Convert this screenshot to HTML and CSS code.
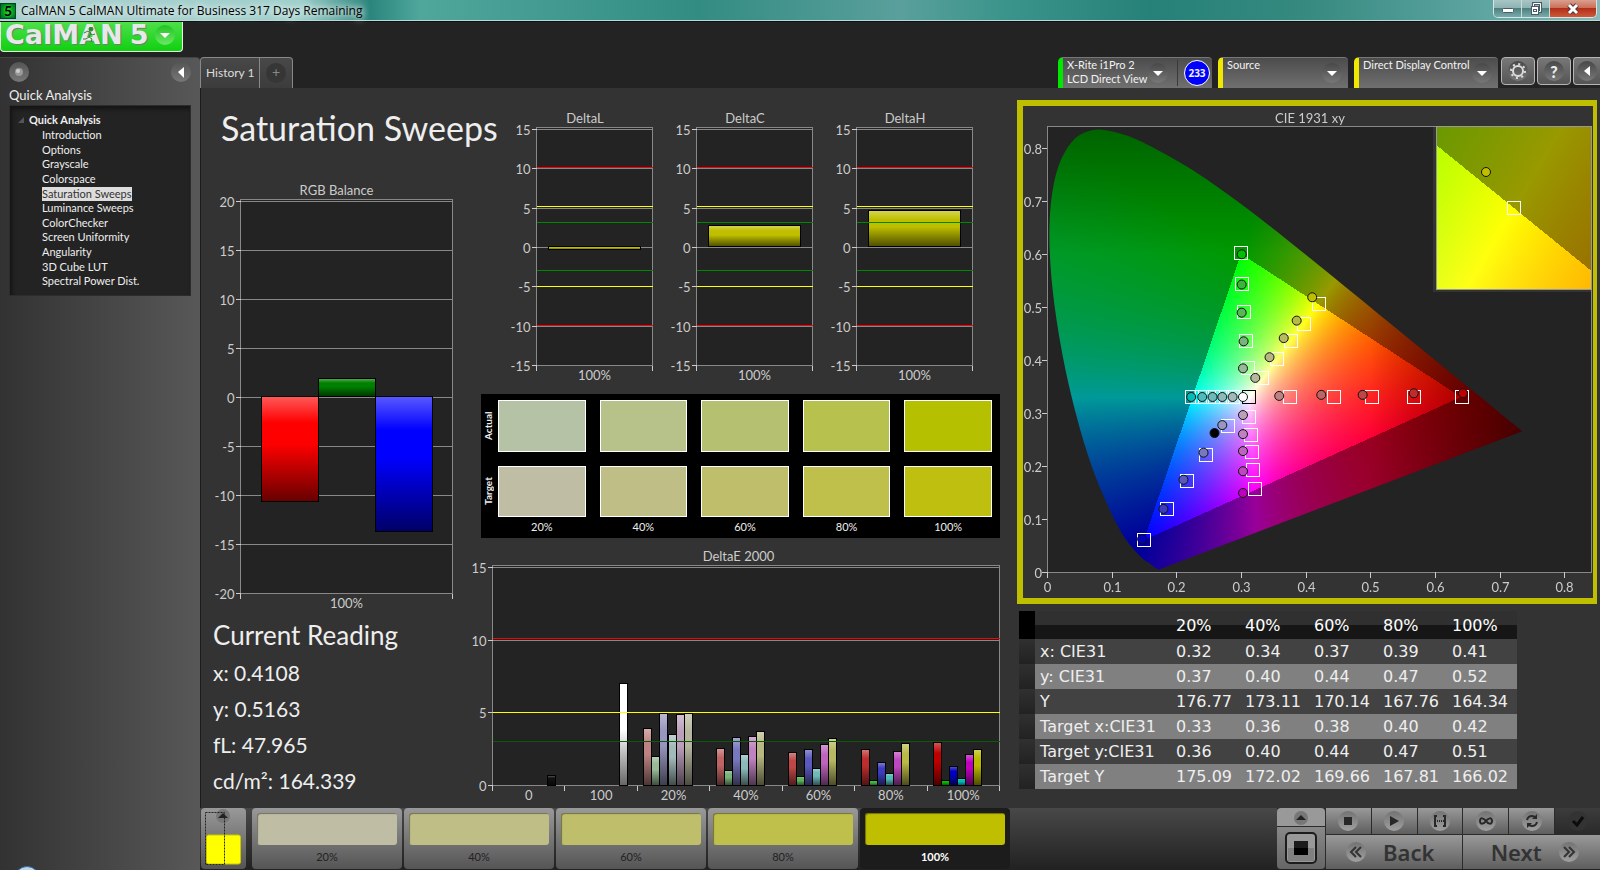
FILE: index.html
```html
<!DOCTYPE html>
<html lang="en">
<head>
    <meta charset="UTF-8">
    <meta name="viewport" content="width=device-width, initial-scale=1.0">
    <title>CalMAN 5 CalMAN Ultimate for Business</title>
    <link rel="stylesheet" href="styles.css">
</head>
<body>
    <header class="titlebar">
        <span class="app-icon">5</span>
        <span class="app-title">CalMAN 5 CalMAN Ultimate for Business 317 Days Remaining</span>
        <div class="window-controls">
            <button type="button" aria-label="Minimize"><svg width="14" height="14"><rect x="1.5" y="6.5" width="11" height="4" rx="1" fill="#fff" stroke="#4a5a66"/></svg></button>
            <button type="button" aria-label="Restore"><svg width="14" height="14" fill="none"><path d="M4.500 4V1.500h7v8H10" stroke="#4a5a66" stroke-width="3"/><path d="M4.500 4V1.500h7v8H10" stroke="#fff"/><rect x="2.500" y="4.500" width="7" height="8" fill="#fff" stroke="#4a5a66"/><rect x="4.500" y="7.500" width="3" height="2" stroke="#4a5a66"/></svg></button>
            <button type="button" class="close" aria-label="Close"><svg width="14" height="14"><path d="M3 3l8 8M11 3l-8 8" stroke="#54343a" stroke-width="5"/><path d="M3 3l8 8M11 3l-8 8" stroke="#fff" stroke-width="3"/></svg></button>
        </div>
    </header>

    <div class="app">
        <aside class="side">
            <button type="button" class="logo">
                <span class="logo-text">CalMAN</span><span class="logo-text">5</span>
                <svg class="runner" viewBox="0 0 14 16" width="14" height="16"><circle cx="9" cy="2" r="2"/><path d="M2 6l4-2 3 2-2 4 3 2-1 3M7 10l-3 2-3 0M8 6l2 2 3-1"/></svg>
                <span class="knob green"><svg width="20" height="20"><path d="M5 8h10l-5 5z" fill="#fff"/></svg></span>
            </button>
            <nav class="sidebar">
                <div class="side-tools">
                    <button type="button" class="knob" aria-label="Pin"><svg width="20" height="20"><circle cx="10" cy="10" r="4" fill="#999"/><circle cx="9" cy="9" r="2" fill="#ccc"/></svg></button>
                    <button type="button" class="knob" aria-label="Collapse"><svg width="20" height="20"><path d="M13 5v11l-6-6z" fill="#fff"/></svg></button>
                </div>
                <h2>Quick Analysis</h2>
                <div class="tree">
                    <p><svg width="8" height="8"><path d="M7 1v6H1z" fill="#555"/></svg>Quick Analysis</p>
                    <ul>
                        <li><a href="#">Introduction</a></li>
                        <li><a href="#">Options</a></li>
                        <li><a href="#">Grayscale</a></li>
                        <li><a href="#">Colorspace</a></li>
                        <li><a href="#" class="selected">Saturation Sweeps</a></li>
                        <li><a href="#">Luminance Sweeps</a></li>
                        <li><a href="#">ColorChecker</a></li>
                        <li><a href="#">Screen Uniformity</a></li>
                        <li><a href="#">Angularity</a></li>
                        <li><a href="#">3D Cube LUT</a></li>
                        <li><a href="#">Spectral Power Dist.</a></li>
                    </ul>
                </div>
                <span class="orb"></span>
            </nav>
        </aside>

        <main class="main">
            <div class="topbar">
                <div class="tabs">
                    <button type="button" class="tab">History 1</button>
                    <button type="button" class="tab add"><span>+</span></button>
                </div>
                <div class="devices">
                    <button type="button" class="device meter">
                        <span class="device-name">X-Rite i1Pro 2<br>LCD Direct View</span>
                        <span class="knob"><svg width="20" height="20"><path d="M5 8h10l-5 5z" fill="#fff"/></svg></span>
                        <span class="count"><b>233</b></span>
                    </button>
                    <button type="button" class="device source">
                        <span class="device-name">Source</span>
                        <span class="knob"><svg width="20" height="20"><path d="M5 8h10l-5 5z" fill="#fff"/></svg></span>
                    </button>
                    <button type="button" class="device display">
                        <span class="device-name">Direct Display Control</span>
                        <span class="knob"><svg width="20" height="20"><path d="M5 8h10l-5 5z" fill="#fff"/></svg></span>
                    </button>
                    <button type="button" class="square" aria-label="Settings"><span class="knob"><svg width="20" height="20" fill="none" stroke="#ddd"><circle cx="10" cy="10" r="5" stroke-width="2"/><circle cx="10" cy="10" r="7" stroke-width="2" stroke-dasharray="2 3.500"/></svg></span></button>
                    <button type="button" class="square" aria-label="Help"><span class="knob">?</span></button>
                    <button type="button" class="square last" aria-label="Collapse"><span class="knob"><svg width="20" height="20"><path d="M13 5v10l-6-5z" fill="#fff"/></svg></span></button>
                </div>
            </div>

            <div class="content">
                <section class="col-left">
                    <h1>Saturation Sweeps</h1>
                    <div class="chart rgb" id="rgbChart"></div>
                    <div class="reading">
                        <h3>Current Reading</h3>
                        <p>x: 0.4108</p>
                        <p>y: 0.5163</p>
                        <p>fL: 47.965</p>
                        <p>cd/m²: 164.339</p>
                    </div>
                </section>

                <section class="col-mid">
                    <div class="deltas">
                        <div class="chart" id="deltaL"></div>
                        <div class="chart" id="deltaC"></div>
                        <div class="chart" id="deltaH"></div>
                    </div>
                    <div class="swatches">
                        <span class="row-name">Actual</span>
                        <i class="a20"></i><i class="a40"></i><i class="a60"></i><i class="a80"></i><i class="a100"></i>
                        <span class="row-name">Target</span>
                        <i class="t20"></i><i class="t40"></i><i class="t60"></i><i class="t80"></i><i class="t100"></i>
                        <span></span>
                        <span>20%</span><span>40%</span><span>60%</span><span>80%</span><span>100%</span>
                    </div>
                    <div class="chart delta-e" id="deltaE"></div>
                </section>

                <section class="col-right">
                    <div class="cie" id="cie"><canvas></canvas></div>
                    <table class="data">
                        <thead>
                            <tr><td class="gutter"></td><th class="name"></th><th>20%</th><th>40%</th><th>60%</th><th>80%</th><th>100%</th></tr>
                        </thead>
                        <tbody>
                            <tr><td class="gutter"></td><th>x: CIE31</th><td>0.32</td><td>0.34</td><td>0.37</td><td>0.39</td><td>0.41</td></tr>
                            <tr><td class="gutter"></td><th>y: CIE31</th><td>0.37</td><td>0.40</td><td>0.44</td><td>0.47</td><td>0.52</td></tr>
                            <tr><td class="gutter"></td><th>Y</th><td>176.77</td><td>173.11</td><td>170.14</td><td>167.76</td><td>164.34</td></tr>
                            <tr><td class="gutter"></td><th>Target x:CIE31</th><td>0.33</td><td>0.36</td><td>0.38</td><td>0.40</td><td>0.42</td></tr>
                            <tr><td class="gutter"></td><th>Target y:CIE31</th><td>0.36</td><td>0.40</td><td>0.44</td><td>0.47</td><td>0.51</td></tr>
                            <tr><td class="gutter"></td><th>Target Y</th><td>175.09</td><td>172.02</td><td>169.66</td><td>167.81</td><td>166.02</td></tr>
                        </tbody>
                    </table>
                </section>
            </div>

            <footer class="bottombar">
                <button type="button" class="level-color" aria-label="Color"><svg width="45" height="61"><circle cx="22" cy="8" r="7" fill="#777"/><path d="M17 10l5-5 5 5z" fill="#222"/><rect x="5.500" y="27" width="34" height="29" rx="2" fill="#ff0" stroke="#c8c800"/><path d="M4.500 4.500h19v52h-19z" fill="none" stroke="#222" stroke-dasharray="2 1"/></svg></button>
                <div class="levels">
                    <button type="button" class="level t20"><i></i>20%</button>
                    <button type="button" class="level t40"><i></i>40%</button>
                    <button type="button" class="level t60"><i></i>60%</button>
                    <button type="button" class="level t80"><i></i>80%</button>
                    <button type="button" class="level t100 active"><i></i>100%</button>
                </div>
                <div class="control">
                    <div class="window-size">
                        <button type="button" aria-label="More"><svg width="20" height="17"><circle cx="10" cy="9" r="7" fill="#777"/><path d="M5 11l5-5 5 5z" fill="#222"/></svg></button>
                        <button type="button" aria-label="Window size"><svg width="32" height="32"><rect x="1" y="1" width="30" height="30" rx="4" fill="#999" stroke="#1c1c1c" stroke-width="2"/><rect x="3" y="16" width="26" height="13" fill="#808080"/><rect x="9" y="9" width="14" height="14" fill="#000"/><rect x="9" y="9" width="14" height="7" fill="#1c1c1c"/></svg></button>
                    </div>
                    <div class="transport">
                        <button type="button" aria-label="Stop"><span class="disc"><svg width="20" height="20"><rect x="6" y="6" width="8" height="8" fill="#282828"/></svg></span></button>
                        <button type="button" aria-label="Read"><span class="disc"><svg width="20" height="20"><path d="M6 5l9 5-9 5z" fill="#282828"/></svg></span></button>
                        <button type="button" aria-label="Read series"><span class="disc"><svg width="20" height="20" fill="none" stroke="#282828" stroke-width="2"><path d="M7 5H5v10h2M13 5h2v10h-2"/><path d="M7 10h7" stroke-dasharray="1 1"/></svg></span></button>
                        <button type="button" aria-label="Continuous"><span class="disc"><svg width="20" height="20" fill="none" stroke="#282828" stroke-width="2"><path d="M10 10C8 7 4 6 4 10s4 3 6 0 6-4 6 0-4 3-6 0z"/></svg></span></button>
                        <button type="button" aria-label="Refresh"><span class="disc"><svg width="20" height="20" fill="none" stroke="#282828" stroke-width="2"><path d="M5 9q1-4 5-4 2 0 4 2M15 11q-1 4-5 4-2 0-4-2"/><path d="M15 3v5h-5zM5 17v-5h5z" fill="#282828" stroke="none"/></svg></span></button>
                        <button type="button" class="off" aria-label="Accept"><span class="disc"><svg width="20" height="20" fill="none" stroke="#0c0c0c" stroke-width="3"><path d="M5 10l4 4 6-8"/></svg></span></button>
                        <button type="button" class="step back"><span class="disc"><svg width="20" height="20" fill="none" stroke="#333" stroke-width="2"><path d="M10 5l-5 5 5 5M15 5l-5 5 5 5"/></svg></span>Back</button>
                        <button type="button" class="step next">Next<span class="disc"><svg width="20" height="20" fill="none" stroke="#333" stroke-width="2"><path d="M5 5l5 5-5 5M10 5l5 5-5 5"/></svg></span></button>
                    </div>
                </div>
            </footer>
        </main>
    </div>
    <script src="script.js"></script>
</body>
</html>
```

FILE: styles.css
```css
* {
    box-sizing: border-box;
}
body {
    margin: 0;
    height: 100vh;
    display: flex;
    flex-direction: column;
    overflow: hidden;
    background-color: #232323;
    color: #eee;
    font-family: Lato, "Liberation Sans", sans-serif;
    font-size: 12px;
}
button {
    margin: 0;
    padding: 0;
    border: none;
    background: none;
    color: inherit;
    font: inherit;
    cursor: pointer;
}
h1, h2, h3, p, ul {
    margin: 0;
    padding: 0;
    font-weight: normal;
}
svg {
    display: block;
}

/* title bar */
.titlebar {
    flex: none;
    height: 22px;
    display: flex;
    align-items: center;
    border-bottom: 1px solid #111;
    box-shadow: inset 0 -1px #b5dcda;
    background: linear-gradient(90deg, #a9cfce 0, #9fd0cc 300px, #2b857c 370px, #4fa79c 420px, #338c82 700px, #5a9f9b 900px, #3c958c 1000px, #268178 1150px, #35897f 1300px, #62a7a4 1500px, #8bb9b8 100%);
}
.app-icon {
    width: 16px;
    height: 16px;
    border: 1px solid #042;
    background: radial-gradient(#0d0, #063);
    color: #000;
    font-weight: 900;
    font-size: 14px;
    line-height: 14px;
    text-align: center;
    text-shadow: 0 0 2px #5f5;
}
.app-title {
    flex: 1;
    padding-left: 5px;
    color: #000;
    font-family: "Open Sans", "Noto Sans", sans-serif;
    font-size: 12px;
    line-height: 20px;
    text-shadow: 0 0 6px #fff, 0 0 10px #fff;
}
.window-controls {
    align-self: flex-start;
    display: flex;
    height: 18px;
    margin-right: 3px;
    border: 1px solid #d5e6e6;
    border-top: none;
    border-radius: 0 0 5px 5px;
    overflow: hidden;
}
.window-controls button {
    width: 28px;
    display: flex;
    justify-content: center;
    align-items: center;
    border-right: 1px solid #c8dcdc;
    background: linear-gradient(#a9c6c6, #8fb3b3 45%, #4f8080 50%, #7aabab);
}
.window-controls .close {
    width: 46px;
    border: none;
    background: linear-gradient(#d9a08f, #cc6f58 45%, #b03018 50%, #d0583a);
}

.app {
    flex: 1;
    min-height: 0;
    display: flex;
}
.knob {
    flex: none;
    width: 20px;
    height: 20px;
    display: flex;
    justify-content: center;
    align-items: center;
    border-radius: 50%;
    background: linear-gradient(#484848, #787878);
}

/* left side */
.side {
    flex: none;
    width: 200px;
    display: flex;
    flex-direction: column;
    gap: 5px;
}
.logo {
    position: relative;
    width: 183px;
    height: 30px;
    padding: 0 16px 4px 4px;
    display: flex;
    align-items: center;
    gap: 7px;
    border: 1px solid #e4f5e4;
    border-top: none;
    border-radius: 0 0 4px 4px;
    background: linear-gradient(#4ee04a, #10d010);
}
.logo-text {
    color: #e8e8e8;
    font-family: "DejaVu Sans", sans-serif;
    font-size: 27px;
    font-weight: bold;
    line-height: 26px;
    text-shadow: 1px 1px 1px #777;
}
.runner {
    position: absolute;
    left: 81px;
    top: 5px;
    fill: #2a8a2a;
    stroke: #2a8a2a;
}
.runner path {
    fill: none;
    stroke-width: 1;
}
.knob.green {
    margin-left: auto;
    background: linear-gradient(#22c322, #6ae866);
}
.sidebar {
    position: relative;
    flex: 1;
    padding: 4px 9px 0;
    border-top: 1px solid #444;
    border-radius: 0 4px 0 0;
    background: linear-gradient(90deg, #323232, #585858);
    overflow: hidden;
}
.side-tools {
    display: flex;
    justify-content: space-between;
}
.side-tools .knob {
    background: linear-gradient(#555, #777);
}
.sidebar h2 {
    margin-top: 4px;
    font-size: 13px;
    line-height: 18px;
}
.tree {
    margin-top: 1px;
    height: 191px;
    padding: 7px 0 6px 7px;
    display: flex;
    flex-direction: column;
    border: 1px solid #2c2c2c;
    background-color: #232323;
    box-shadow: inset 2px 3px 4px #141414;
    font-size: 11px;
    line-height: 14px;
}
.tree p {
    display: flex;
    align-items: center;
    gap: 4px;
    font-weight: bold;
}
.tree ul {
    flex: 1;
    display: flex;
    flex-direction: column;
    list-style: none;
    padding: 1px 0 0 25px;
}
.tree li {
    flex: 1;
}
.tree a {
    display: inline-block;
    color: #eee;
    text-decoration: none;
}
.tree .selected {
    background-color: #ddd;
    color: #333;
}
.orb {
    position: absolute;
    left: 14px;
    bottom: -22px;
    width: 26px;
    height: 26px;
    border: 1px solid #2b6cab;
    border-radius: 50%;
    background-color: #c3d3e0;
}

/* top bar */
.main {
    flex: 1;
    min-width: 0;
    display: flex;
    flex-direction: column;
}
.topbar {
    flex: none;
    height: 66px;
    display: flex;
    justify-content: space-between;
    align-items: flex-end;
}
.tabs {
    display: flex;
    height: 31px;
    border: 1px solid #888;
    border-bottom: none;
    border-radius: 4px 4px 0 0;
    background: linear-gradient(#484848, #3c3c3c);
}
.tab {
    padding: 0 4px 1px 5px;
    color: #ddd;
    font-size: 12px;
}
.tab.add {
    width: 33px;
    display: flex;
    justify-content: center;
    align-items: center;
    border-left: 1px solid #888;
}
.tab.add span {
    width: 20px;
    height: 20px;
    border-radius: 50%;
    background-color: #363636;
    color: #888;
    font-size: 14px;
    line-height: 18px;
}
.devices {
    display: flex;
    height: 31px;
    overflow: hidden;
}
.device {
    display: flex;
    align-items: center;
    padding: 0 6px 0 4px;
    margin-right: 6px;
    border-top: 1px solid #777;
    border-left: 5px solid #f0e800;
    border-radius: 5px 4px 0 0;
    background: linear-gradient(#4c4c4c, #707070);
    color: #f2f2f2;
    font-size: 11px;
    line-height: 14px;
    text-align: left;
    white-space: nowrap;
}
.device-name {
    flex: 1;
    align-self: flex-start;
}
.meter {
    width: 154px;
    padding-right: 2px;
    border-left-color: #00e800;
}
.source {
    width: 130px;
}
.display {
    width: 144px;
    margin-right: 3px;
}
.count {
    margin-left: 9px;
    padding-left: 6px;
    border-left: 1px solid #3a3a3a;
}
.count b {
    display: block;
    width: 26px;
    height: 26px;
    border: 1px solid #fff;
    border-radius: 50%;
    background-color: #00f;
    font-family: "Open Sans", sans-serif;
    font-size: 10px;
    line-height: 24px;
    text-align: center;
}
.square {
    flex: none;
    width: 34px;
    height: 28px;
    margin-right: 2px;
    margin-bottom: 3px;
    display: flex;
    justify-content: center;
    align-items: center;
    border: 1px solid #b5b5b5;
    border-radius: 4px;
    background: linear-gradient(#777, #555);
    font-size: 16px;
    font-weight: 900;
}
.square.last {
    width: 27px;
    margin-right: 0;
    border-right: none;
    border-radius: 4px 0 0 4px;
}

/* work area */
.content {
    flex: 1;
    min-height: 0;
    display: grid;
    grid-template-columns: 273fr 527fr 596fr;
    padding-right: 3px;
    border-left: 1px solid #1c1c1c;
    background-color: #333;
}
.content section {
    min-width: 0;
}
.chart svg {
    overflow: visible;
}
.chart text, .cie text {
    fill: #ccc;
    font-family: Lato, "Liberation Sans", sans-serif;
    font-size: 13px;
}
.col-left {
    padding-left: 12px;
}
.col-left h1 {
    margin: 18px 0 30px 8px;
    font-size: 34px;
    line-height: 44px;
    white-space: nowrap;
}
.rgb {
    height: 432px;
    margin: 0 20px 0 4px;
}
.reading {
    font-size: 21px;
    line-height: 36px;
}
.reading h3 {
    margin: 5px 0 2px;
    font-size: 26px;
    line-height: 36px;
}
.deltas {
    height: 276px;
    margin-top: 20px;
    padding: 0 27px 0 40px;
    display: grid;
    grid-template-columns: repeat(3, 1fr);
    gap: 20px;
}
.swatches {
    height: 144px;
    margin: 10px 1px 8px 7px;
    padding: 6px 8px 0 0;
    display: grid;
    grid-template-columns: 3px repeat(5, 1fr);
    grid-template-rows: 52px 51px 18px;
    column-gap: 14px;
    row-gap: 14px;
    background-color: #000;
    font-size: 11px;
    text-align: center;
}
.swatches > span:nth-last-child(-n+6) {
    margin-top: -11px;
    line-height: 14px;
}
.swatches i {
    border: 1px solid #fff;
}
.row-name {
    width: 14px;
    writing-mode: vertical-rl;
    transform: rotate(180deg);
    font-size: 10px;
    font-weight: bold;
    line-height: 14px;
}
.a20 { background-color: #b6c2a6; }
.a40 { background-color: #b6c28a; }
.a60 { background-color: #b5c170; }
.a80 { background-color: #b7c14e; }
.a100 { background-color: #b5c100; }
.swatches .t20, .t20 i { background-color: #bfbea4; }
.swatches .t40, .t40 i { background-color: #c0be87; }
.swatches .t60, .t60 i { background-color: #bfbe6b; }
.swatches .t80, .t80 i { background-color: #bfc04b; }
.swatches .t100 { background-color: #bfbf10; }
.t100 i { background-color: #bfbf00; }
.delta-e {
    height: 258px;
}

/* CIE diagram and table */
.col-right {
    padding-left: 16px;
}
.cie {
    height: 504px;
    margin-top: 12px;
    display: grid;
    border: 6px solid #bfbf00;
    border-right-width: 4px;
}
.cie canvas, .cie svg {
    grid-area: 1 / 1;
    width: 100%;
    height: 100%;
    min-width: 0;
    min-height: 0;
}
.data {
    margin: 7px 0 0 2px;
    border-collapse: collapse;
    font-family: "DejaVu Sans", sans-serif;
    font-size: 16px;
    line-height: 25px;
    text-align: left;
}
.data th {
    font-weight: normal;
}
.data th, .data td {
    width: 69px;
    height: 25px;
    padding: 0;
}
.data thead th {
    height: 28px;
    color: #fff;
    background: linear-gradient(#303030 50%, #161616 50%);
}
.data .gutter {
    width: 16px;
    background: linear-gradient(#303030, #222);
}
.data thead .gutter {
    background: #000;
}
.data tbody th, .data .name {
    width: 141px;
    padding-left: 5px;
}
.data th:last-child, .data td:last-child {
    width: 65px;
}
.data tbody tr {
    background-color: #424242;
}
.data tbody tr:nth-child(even) {
    background-color: #808080;
}

/* bottom bar */
.bottombar {
    flex: none;
    height: 62px;
    padding-left: 1px;
    display: flex;
    border-bottom: 1px solid #222;
    background: linear-gradient(#484848, #222);
}
.level-color {
    width: 45px;
    margin-right: 6px;
    border-radius: 4px;
    background: linear-gradient(#999, #555);
}
.levels {
    display: flex;
    gap: 2px;
}
.level {
    width: 150px;
    padding: 5px 5px 0;
    display: flex;
    flex-direction: column;
    align-items: center;
    border-radius: 4px;
    background: linear-gradient(#999, #555);
    color: #222;
    font-size: 11px;
    line-height: 24px;
}
.level i {
    width: 140px;
    height: 36px;
    border-radius: 3px;
    box-shadow: inset 1px 1px 1px rgba(0,0,0,0.4);
}
.level.active {
    background: #1c1c1c;
    color: #fff;
    font-weight: bold;
}
.control {
    margin-left: auto;
    display: flex;
    gap: 1px;
    background-color: #2b2b2b;
}
.window-size {
    width: 48px;
    display: flex;
    flex-direction: column;
    gap: 1px;
}
.window-size button {
    flex: 1;
    display: flex;
    justify-content: center;
    align-items: center;
    border-radius: 0 0 4px 4px;
    background: linear-gradient(#888, #666);
}
.window-size button:first-child {
    flex: none;
    height: 18px;
    border-radius: 4px 4px 0 0;
    background: #999;
}
.transport {
    width: 274px;
    display: grid;
    grid-template-columns: repeat(6, 1fr);
    gap: 1px;
}
.transport button {
    display: flex;
    justify-content: center;
    align-items: center;
    background: linear-gradient(#999, #5e5e5e);
}
.transport .step {
    grid-column: span 3;
    gap: 17px;
    color: #333;
    font-family: "Noto Sans", sans-serif;
    font-size: 22px;
    font-weight: 600;
    line-height: 28px;
}
.transport .back {
    padding-right: 8px;
}
.transport .next {
    padding-left: 6px;
}
.transport .off {
    background: linear-gradient(#3c3c3c, #2a2a2a);
}
.disc {
    width: 20px;
    height: 20px;
    border-radius: 50%;
    background: linear-gradient(#737373, #a0a0a0);
}
.off .disc {
    background: #333;
}
```

FILE: script.js
```js
const SHADE = '<defs><linearGradient id="shade" x1="0" y1="0" x2="0" y2="1">' +
    '<stop offset="0" stop-color="#fff" stop-opacity=".35"/><stop offset=".25" stop-color="#fff" stop-opacity="0"/>' +
    '<stop offset=".45" stop-color="#000" stop-opacity="0"/><stop offset="1" stop-color="#000" stop-opacity=".6"/></linearGradient></defs>';

function line(x1, y1, x2, y2, color) {
    return `<path d="M${x1} ${y1}L${x2} ${y2}" stroke="${color}" shape-rendering="crispEdges"/>`;
}

function label(x, y, text, anchor) {
    return `<text x="${x}" y="${y}" text-anchor="${anchor}">${text}</text>`;
}

// Bar chart with a fixed value axis and optional limit lines
function barChart(id, o) {
    const el = document.getElementById(id);
    const w = el.clientWidth, h = el.clientHeight;
    const left = o.left + 0.5, right = w - 1.5, top = 19.5, bottom = h - 18.5;
    // the grid stops 2px under the frame, limit lines use the full height
    const scale = (v, room) => Math.floor(bottom - (v - o.min) * (bottom - top - room) / (o.max - o.min)) + 0.5;
    const y = v => scale(v, 2);
    let s = SHADE + label(w / 2 + 1, 15, o.title, 'middle');
    s += `<rect x="${left}" y="${top}" width="${right - left}" height="${bottom - top}" fill="#232323" stroke="#888" shape-rendering="crispEdges"/>`;
    for (let v = o.min; v <= o.max; v += 5) {
        const yy = v === o.min ? bottom : y(v);
        s += line(left - 5, yy, left, yy, '#ccc') + line(left, yy, right, yy, '#888');
        s += label(left - 6, yy + 5, v, 'end');
    }
    const n = o.groups.length, step = (right - left) / n;
    const zero = o.min < 0 ? y(0) - 1 : bottom;
    o.groups.forEach((g, i) => {
        const x0 = left + i * step;
        s += line(x0, bottom, x0, bottom + 5, '#ccc');
        s += label(x0 + step / 2, bottom + 14, g.name, 'middle');
        g.bars.forEach(([slot, value, color]) => {
            const bw = step * o.barWidth;
            const x = Math.floor(x0 + step * o.pad + slot * bw) + 0.5;
            const yv = y(value);
            const rect = `x="${x}" y="${Math.min(zero, yv)}" width="${Math.round(bw)}" height="${Math.max(3, Math.abs(zero - yv))}"`;
            s += `<rect ${rect} fill="${color}"/><rect ${rect} fill="url(#shade)" stroke="#000"/>`;
        });
    });
    s += line(right, bottom, right, bottom + 5, '#ccc');
    (o.limits || []).forEach(([v, color]) => {
        const yy = scale(v, 0);
        s += line(left, yy, right, yy, color);
    });
    el.innerHTML = `<svg width="${w}" height="${h}">${s}</svg>`;
}

const deltaLimits = [[10, '#f00'], [5, '#ff0'], [3, '#080'], [-3, '#080'], [-5, '#ff0'], [-10, '#f00']];
const sweepColors = [
    ['#be8282', '#96ba96', '#9696be', '#a2b9b9', '#bb9fbb', '#b7b79f'],
    ['#be6464', '#78b478', '#7878be', '#8cb9b9', '#be82be', '#b7b782'],
    ['#be4646', '#5ab45a', '#5a5abe', '#6eb9b9', '#be64be', '#b9b964'],
    ['#be2d2d', '#3cb43c', '#3c3cbe', '#50b9b9', '#be46be', '#b9b946'],
    ['#be0000', '#00b400', '#0000be', '#00b9b9', '#be00be', '#b9b900']
];
const sweepValues = [
    [3.9, 2.0, 4.95, 3.5, 4.9, 4.95],
    [2.55, 1.0, 3.3, 2.1, 3.4, 3.7],
    [2.25, 0.6, 2.5, 1.2, 2.85, 3.25],
    [2.5, 0.35, 1.6, 0.85, 2.35, 2.9],
    [2.95, 0.35, 1.3, 0.5, 2.1, 2.5]
];

const LOCUS = [[.1741,.005],[.1714,.0051],[.1644,.0109],[.1566,.0177],[.144,.0297],[.1241,.0578],[.1096,.0868],[.0913,.1327],
    [.0687,.2007],[.0454,.295],[.0235,.4127],[.0082,.5384],[.0039,.6548],[.0139,.7502],[.0389,.812],[.0743,.8338],[.1142,.8262],
    [.1547,.8059],[.2296,.7543],[.3016,.6923],[.3731,.6245],[.4441,.5547],[.5125,.4866],[.5752,.4242],[.627,.3725],[.6658,.334],
    [.6915,.3083],[.719,.2809],[.7347,.2653]];

const TARGETS = [[.3,.602],[.302,.543],[.304,.491],[.307,.436],[.31,.384],[.42,.506],[.397,.468],[.377,.436],[.356,.402],[.333,.366],
    [.376,.33],[.444,.33],[.503,.33],[.567,.33],[.641,.33],[.224,.33],[.24,.33],[.256,.33],[.271,.33],[.287,.33],
    [.313,.293],[.315,.258],[.317,.226],[.319,.192],[.321,.156],[.28,.276],[.246,.221],[.216,.172],[.185,.119],[.15,.06]];

const READINGS = [[.301,.599,'#00be00'],[.301,.542,'#3cb43c'],[.301,.489,'#5ab45a'],[.304,.435,'#78b478'],[.303,.384,'#96ba96'],
    [.41,.518,'#bfbf00'],[.386,.474,'#b9b946'],[.366,.441,'#b9b964'],[.344,.405,'#b7b782'],[.322,.366,'#b7b79f'],
    [.359,.332,'#be8282'],[.424,.334,'#be6464'],[.488,.334,'#be4646'],[.567,.337,'#be2d2d'],[.643,.337,'#be0000'],
    [.223,.33,'#00b9b9'],[.24,.33,'#50b9b9'],[.256,.33,'#6eb9b9'],[.271,.33,'#8cb9b9'],[.287,.33,'#a2b9b9'],[.303,.33,'#fff'],
    [.303,.296,'#bb9fbb'],[.303,.26,'#be82be'],[.303,.228,'#be64be'],[.303,.19,'#be46be'],[.303,.149,'#be00be'],
    [.271,.277,'#9696be'],[.242,.225,'#7878be'],[.211,.174,'#5a5abe'],[.18,.119,'#3c3cbe'],[.147,.062,'#0000be'],[.259,.262,'#000']];

// Display colour for a chromaticity, dimmed outside the Rec.709 triangle
function xyColor(x, y) {
    y = Math.max(y, 0.001);
    const X = x / y, Z = (1 - x - y) / y;
    let rgb = [3.2406 * X - 1.5372 - 0.4986 * Z, -0.9689 * X + 1.8758 + 0.0415 * Z, 0.0557 * X - 0.204 + 1.057 * Z];
    const outside = Math.min(...rgb) < 0;
    const max = Math.max(...rgb);
    const k = (outside ? 153 : 255) * (1 - 2.3 * Math.max(0, x - 0.5)) * (1 - 1.5 * Math.max(0, y - 0.6));
    return rgb.map(c => Math.max(0, c / max) * k);
}

function paint(w, h, toXY) {
    const c = document.createElement('canvas');
    c.width = w;
    c.height = h;
    const ctx = c.getContext('2d');
    const img = ctx.createImageData(w, h);
    for (let j = 0; j < h; j++) {
        for (let i = 0; i < w; i++) {
            const [x, y] = toXY(i + 0.5, j + 0.5);
            img.data.set([...xyColor(x, y), 255], (j * w + i) * 4);
        }
    }
    ctx.putImageData(img, 0, 0);
    return c;
}

function drawCie() {
    const el = document.getElementById('cie');
    const canvas = el.querySelector('canvas');
    const w = el.clientWidth, h = el.clientHeight;
    const left = 24, right = w - 2, top = 20, bottom = h - 26;
    const pw = right - left, ph = bottom - top;
    const px = x => left + x * pw / 0.841;
    const py = y => bottom - y * ph / 0.841;

    canvas.width = w;
    canvas.height = h;
    const ctx = canvas.getContext('2d');
    ctx.fillStyle = '#232323';
    ctx.fillRect(left, top, pw, ph);
    ctx.save();
    ctx.beginPath();
    const p = LOCUS.map(([x, y]) => [px(x), py(y)]);
    ctx.moveTo(...p[0]);
    for (let i = 0; i < p.length - 1; i++) {
        const a = p[i - 1] || p[i], b = p[i], c = p[i + 1], d = p[i + 2] || c;
        ctx.bezierCurveTo(b[0] + (c[0] - a[0]) / 6, b[1] + (c[1] - a[1]) / 6,
            c[0] - (d[0] - b[0]) / 6, c[1] - (d[1] - b[1]) / 6, c[0], c[1]);
    }
    ctx.closePath();
    ctx.clip();
    ctx.drawImage(paint(pw, ph, (i, j) => [i / pw * 0.841, (ph - j) / ph * 0.841]), left, top);
    ctx.restore();

    // magnified view round the current target
    const iw = 155, ih = 163, ix = right - iw, iy = top;
    ctx.fillStyle = '#333';
    ctx.fillRect(ix - 3, iy, iw + 3, ih + 3);
    ctx.drawImage(paint(iw, ih, (i, j) => [0.4193 + (i - 78) / 3230, 0.5053 - (j - 82) / 3300]), ix, iy);

    let s = label(w / 2 + 2, 17, 'CIE 1931 xy', 'middle');
    s += `<rect x="${left + .5}" y="${top + .5}" width="${pw}" height="${ph}" fill="none" stroke="#888"/>`;
    s += `<rect x="${ix + .5}" y="${iy + .5}" width="${iw}" height="${ih}" fill="none" stroke="#999"/>`;
    for (let i = 0; i <= 8; i++) {
        const x = Math.round(px(i / 10)) + 0.5, y = Math.round(py(i / 10)) + 0.5;
        s += line(x, bottom, x, bottom + 6, '#ccc') + line(left - 5, y, left, y, '#ccc');
        s += label(x, bottom + 20, i / 10, 'middle') + label(left - 5, y + 5, i / 10, 'end');
    }
    const square = (x, y, color) => `<rect x="${Math.round(x) - 6.5}" y="${Math.round(y) - 6.5}" width="13" height="13" fill="none" stroke="${color}"/>`;
    const dot = (x, y, color) => `<circle cx="${x}" cy="${y}" r="4.500" fill="${color}" stroke="#111"/>`;
    TARGETS.forEach(t => s += square(px(t[0]), py(t[1]), '#fff'));
    s += square(px(0.312), py(0.33), '#000');
    READINGS.forEach(r => s += dot(px(r[0]), py(r[1]), r[2]));
    s += dot(ix + 50, iy + 46, '#bfbf00') + square(ix + 78, iy + 82, '#fff');

    const old = el.querySelector('svg');
    if (old) old.remove();
    el.insertAdjacentHTML('beforeend', `<svg>${s}</svg>`);
}

function draw() {
    barChart('rgbChart', {
        title: 'RGB Balance', min: -20, max: 20, left: 23, pad: 0.1, barWidth: 0.268,
        groups: [{ name: '100%', bars: [[0, -10.6, '#f00'], [1, 1.9, '#008000'], [2, -13.7, '#00f']] }]
    });
    [['L', -0.25], ['C', 2.85], ['H', 4.75]].forEach(([k, v]) => barChart('delta' + k, {
        title: 'Delta' + k, min: -15, max: 15, left: 22, pad: 0.1, barWidth: 0.79, limits: deltaLimits,
        groups: [{ name: '100%', bars: [[0, v, '#bfbf00']] }]
    }));
    const groups = [{ name: '0', bars: [[6, 0.7, '#111']] }, { name: '100', bars: [[6, 7, '#fff']] }];
    sweepValues.forEach((row, i) => groups.push({
        name: (i + 1) * 20 + '%',
        bars: row.map((v, j) => [j, v, sweepColors[i][j]])
    }));
    barChart('deltaE', {
        title: 'DeltaE 2000', min: 0, max: 15, left: 18, pad: 0.09, barWidth: 0.1111,
        limits: [[10, '#f00'], [5, '#ff0'], [3, '#0a5a0a']], groups: groups
    });
    drawCie();
}

draw();
window.addEventListener('resize', draw);
```
